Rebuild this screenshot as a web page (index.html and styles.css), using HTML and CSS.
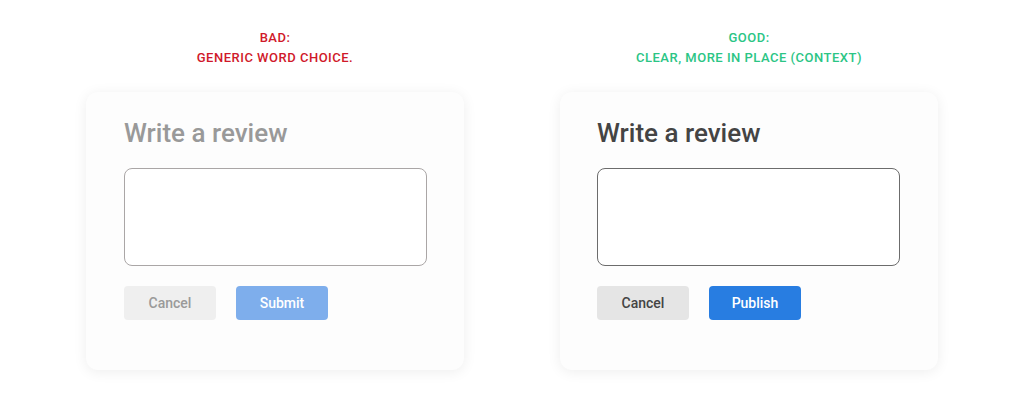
FILE: index.html
```html
<!DOCTYPE html>
<html lang="en">
<head>
<meta charset="utf-8">
<title>Write a review</title>
<link rel="stylesheet" href="styles.css">
</head>
<body>
<main class="compare">
  <section class="column column-bad">
    <header class="label label-bad">
      <div>BAD:</div>
      <div>GENERIC WORD CHOICE.</div>
    </header>
    <div class="card">
      <h2 class="card-title">Write a review</h2>
      <div class="field"></div>
      <div class="actions">
        <button class="btn btn-cancel">Cancel</button>
        <button class="btn btn-primary">Submit</button>
      </div>
    </div>
  </section>
  <section class="column column-good">
    <header class="label label-good">
      <div>GOOD:</div>
      <div>CLEAR, MORE IN PLACE (CONTEXT)</div>
    </header>
    <div class="card">
      <h2 class="card-title">Write a review</h2>
      <div class="field"></div>
      <div class="actions">
        <button class="btn btn-cancel">Cancel</button>
        <button class="btn btn-primary">Publish</button>
      </div>
    </div>
  </section>
</main>
</body>
</html>
```

FILE: styles.css
```css
* { box-sizing: border-box; }
html, body { margin: 0; padding: 0; background: #ffffff; }
body {
  font-family: Roboto, "Liberation Sans", Arial, sans-serif;
  width: 1024px;
  height: 400px;
  overflow: hidden;
}
.compare {
  display: flex;
  gap: 96px;
  padding: 28px 87px 0 86px;
}
.column {
  width: 378px;
  display: flex;
  flex-direction: column;
}
.label {
  text-align: center;
  font-size: 13px;
  line-height: 20px;
  font-weight: 500;
  letter-spacing: 0.5px;
}
.label-bad { color: #d0192a; }
.label-good { color: #2bc585; }
.card {
  margin-top: 24px;
  height: 278px;
  border-radius: 12px;
  background: #fdfdfd;
  box-shadow: 0 2px 14px rgba(0,0,0,0.07);
  padding: 26px 38px 0 38px;
}
.column-good .card { padding-left: 37px; }
.card-title {
  margin: 0;
  font-size: 26px;
  line-height: 30px;
  font-weight: 500;
}
.field {
  margin-top: 20px;
  width: 303px;
  height: 98px;
  border-radius: 8px;
  background: #ffffff;
}
.actions {
  margin-top: 20px;
  display: flex;
  gap: 20px;
}
.btn {
  width: 92px;
  height: 34px;
  border: none;
  border-radius: 4px;
  font-family: inherit;
  font-size: 14px;
  font-weight: 500;
  padding: 0;
}
.column-bad .card-title { color: #999999; }
.column-bad .field { border: 1px solid #aaa6a6; }
.column-bad .btn-cancel { background: #efefef; color: #9a9a9a; }
.column-bad .btn-primary { background: #7eaeec; color: #ffffff; }
.column-good .card-title { color: #444444; }
.column-good .field { border: 1px solid #6c6c6c; }
.column-good .btn-cancel { background: #e5e5e5; color: #444444; }
.column-good .btn-primary { background: #287de1; color: #ffffff; }
```
